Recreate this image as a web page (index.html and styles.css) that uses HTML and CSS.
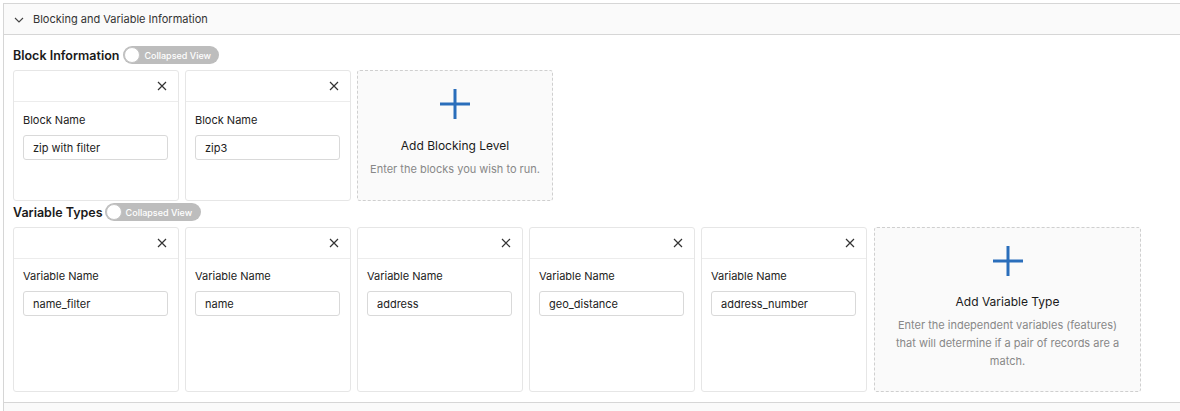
FILE: index.html
```html
<!DOCTYPE html>
<html>
<head>
<meta charset="utf-8">
<link rel="stylesheet" href="styles.css">
</head>
<body>
<div class="panel">
  <div class="panel-header">
    <svg class="chev" width="10" height="6" viewBox="0 0 10 6"><path d="M1 1 L5 5 L9 1" fill="none" stroke="#444" stroke-width="1.1"/></svg>
    <span class="panel-title">Blocking and Variable Information</span>
  </div>
  <div class="panel-body">
    <div class="section-head">
      <span class="section-title">Block Information</span>
      <span class="toggle"><span class="knob"></span><span class="toggle-text">Collapsed View</span></span>
    </div>
    <div class="cards block-cards">
      <div class="card">
        <div class="card-head"><svg class="close" width="10" height="10" viewBox="0 0 10 10"><path d="M1 1 L9 9 M9 1 L1 9" stroke="#333" stroke-width="1.2"/></svg></div>
        <div class="card-body">
          <div class="label">Block Name</div>
          <div class="input">zip with filter</div>
        </div>
      </div>
      <div class="card">
        <div class="card-head"><svg class="close" width="10" height="10" viewBox="0 0 10 10"><path d="M1 1 L9 9 M9 1 L1 9" stroke="#333" stroke-width="1.2"/></svg></div>
        <div class="card-body">
          <div class="label">Block Name</div>
          <div class="input">zip3</div>
        </div>
      </div>
      <div class="add-card add-block">
        <svg class="plus" width="32" height="32" viewBox="0 0 32 32"><path d="M16 1 V31 M1 16 H31" stroke="#2a6ebb" stroke-width="3"/></svg>
        <div class="add-title">Add Blocking Level</div>
        <div class="add-desc">Enter the blocks you wish to run.</div>
      </div>
    </div>
    <div class="section-head var-head">
      <span class="section-title">Variable Types</span>
      <span class="toggle"><span class="knob"></span><span class="toggle-text">Collapsed View</span></span>
    </div>
    <div class="cards var-cards">
      <div class="card">
        <div class="card-head"><svg class="close" width="10" height="10" viewBox="0 0 10 10"><path d="M1 1 L9 9 M9 1 L1 9" stroke="#333" stroke-width="1.2"/></svg></div>
        <div class="card-body">
          <div class="label">Variable Name</div>
          <div class="input">name_filter</div>
        </div>
      </div>
      <div class="card">
        <div class="card-head"><svg class="close" width="10" height="10" viewBox="0 0 10 10"><path d="M1 1 L9 9 M9 1 L1 9" stroke="#333" stroke-width="1.2"/></svg></div>
        <div class="card-body">
          <div class="label">Variable Name</div>
          <div class="input">name</div>
        </div>
      </div>
      <div class="card">
        <div class="card-head"><svg class="close" width="10" height="10" viewBox="0 0 10 10"><path d="M1 1 L9 9 M9 1 L1 9" stroke="#333" stroke-width="1.2"/></svg></div>
        <div class="card-body">
          <div class="label">Variable Name</div>
          <div class="input">address</div>
        </div>
      </div>
      <div class="card">
        <div class="card-head"><svg class="close" width="10" height="10" viewBox="0 0 10 10"><path d="M1 1 L9 9 M9 1 L1 9" stroke="#333" stroke-width="1.2"/></svg></div>
        <div class="card-body">
          <div class="label">Variable Name</div>
          <div class="input">geo_distance</div>
        </div>
      </div>
      <div class="card">
        <div class="card-head"><svg class="close" width="10" height="10" viewBox="0 0 10 10"><path d="M1 1 L9 9 M9 1 L1 9" stroke="#333" stroke-width="1.2"/></svg></div>
        <div class="card-body">
          <div class="label">Variable Name</div>
          <div class="input">address_number</div>
        </div>
      </div>
      <div class="add-card add-var">
        <svg class="plus" width="32" height="32" viewBox="0 0 32 32"><path d="M16 1 V31 M1 16 H31" stroke="#2a6ebb" stroke-width="3"/></svg>
        <div class="add-title">Add Variable Type</div>
        <div class="add-desc">Enter the independent variables (features) that will determine if a pair of records are a match.</div>
      </div>
    </div>
  </div>
</div>
<div class="next-panel"></div>
</body>
</html>
```

FILE: styles.css
```css
html, body {
  margin: 0;
  padding: 0;
  background: #fff;
  overflow: hidden;
}
body {
  font-family: Inter, "Liberation Sans", sans-serif;
  color: #222;
  padding: 3px 0 0 3px;
}
.panel {
  border: 1px solid #d6d6d6;
  border-right: none;
  margin-right: -20px;
}
.next-panel {
  height: 20px;
  background: #fafafa;
  border-left: 1px solid #d6d6d6;
}
.panel-header {
  height: 30px;
  background: #fafafa;
  border-bottom: 1px solid #d6d6d6;
  display: flex;
  align-items: center;
  padding-left: 10px;
}
.chev {
  margin-right: 9px;
  margin-top: 1px;
}
.panel-title {
  font-size: 11px;
  color: #333;
}
.panel-body {
  padding: 11px 0 10px 9px;
}
.section-head {
  display: flex;
  align-items: center;
  height: 18px;
  margin-bottom: 6px;
}
.var-head {
  margin-top: 2px;
  margin-bottom: 6px;
}
.section-title {
  font-weight: 600;
  font-size: 12.5px;
  color: #1a1a1a;
  margin-right: 4px;
}
.var-head .section-title {
  margin-right: 2px;
}
.toggle {
  display: inline-flex;
  align-items: center;
  height: 18px;
  width: 96px;
  box-sizing: border-box;
  background: #bdbdbd;
  border-radius: 9px;
  padding: 0 0 0 1px;
}
.knob {
  width: 16px;
  height: 16px;
  background: #fff;
  border-radius: 50%;
  box-sizing: border-box;
  border: 1px solid #c4c4c4;
}
.toggle-text {
  color: #fff;
  font-size: 9px;
  font-weight: 500;
  margin-left: 4px;
}
.cards {
  display: flex;
  gap: 6px;
}
.card {
  width: 166px;
  box-sizing: border-box;
  border: 1px solid #e6e6e6;
  border-radius: 3px;
  background: #fff;
}
.block-cards .card { height: 131px; }
.var-cards .card { height: 165px; }
.card-head {
  height: 30px;
  border-bottom: 1px solid #ececec;
  display: flex;
  align-items: center;
  justify-content: flex-end;
  padding-right: 11px;
}
.card-body {
  padding: 11px 10px 0 9px;
}
.var-cards .card-body {
  padding-top: 10px;
}
.label {
  font-size: 11px;
  color: #222;
  margin-bottom: 8px;
}
.input {
  height: 25px;
  box-sizing: border-box;
  border: 1px solid #d9d9d9;
  border-radius: 3px;
  font-size: 11px;
  color: #222;
  padding-left: 9px;
  display: flex;
  align-items: center;
}
.add-card {
  box-sizing: border-box;
  border: 1px dashed #cfcfcf;
  border-radius: 3px;
  background: #fafafa;
  display: flex;
  flex-direction: column;
  align-items: center;
  text-align: center;
}
.add-block {
  width: 196px;
  height: 131px;
  padding-top: 17px;
}
.add-var {
  width: 267px;
  height: 165px;
  margin-left: 1px;
  padding-top: 17px;
}
.add-title {
  font-size: 12px;
  color: #1a1a1a;
  margin-top: 18px;
}
.add-var .add-title {
  margin-top: 17px;
}
.add-desc {
  font-size: 11px;
  color: #888;
  line-height: 18px;
  margin-top: 7px;
  padding: 0 16px;
}
.add-block .add-desc {
  padding: 0;
}
```
